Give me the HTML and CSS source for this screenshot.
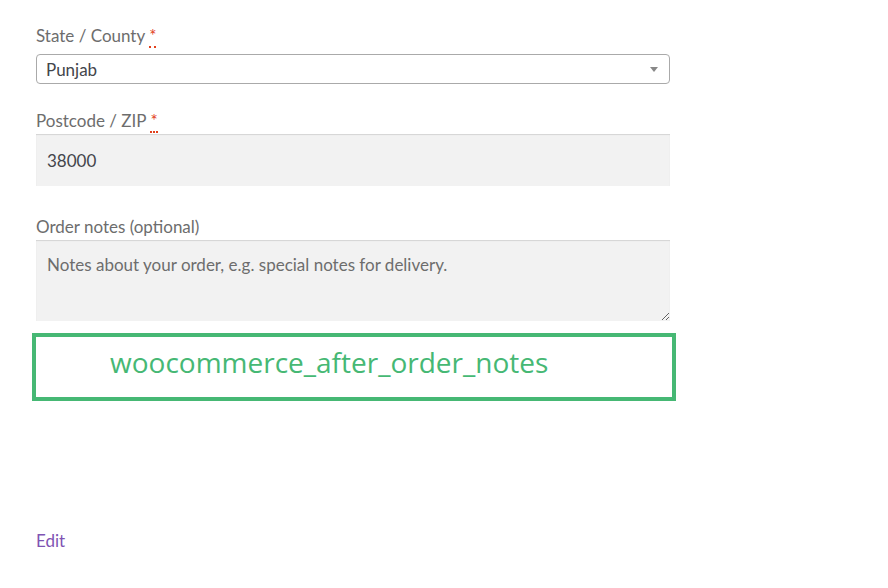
FILE: index.html
```html
<!DOCTYPE html>
<html lang="en">
<head>
    <meta charset="UTF-8">
    <meta name="viewport" content="width=device-width, initial-scale=1.0">
    <title>Checkout</title>
    <link rel="stylesheet" href="styles.css">
</head>
<body>
    <div class="checkout">
        <p class="form-row state-row">
            <label class="field-label">State / County <abbr class="required" title="required">*</abbr></label>
            <span class="select-box">
                <span class="select-value">Punjab</span>
                <span class="select-arrow"></span>
            </span>
        </p>
        <p class="form-row">
            <label class="field-label" for="postcode">Postcode / ZIP <abbr class="required" title="required">*</abbr></label>
            <input class="input-text" id="postcode" type="text" value="38000">
        </p>
        <p class="form-row notes-row">
            <label class="field-label" for="order_comments">Order notes (optional)</label>
            <textarea class="input-text notes" id="order_comments" placeholder="Notes about your order, e.g. special notes for delivery."></textarea>
        </p>
        <div class="hook-box">woocommerce_after_order_notes</div>
        <a class="edit-link" href="#">Edit</a>
    </div>
</body>
</html>
```

FILE: styles.css
```css
body {
    margin: 0;
    background: #fff;
    font-family: "Lato", "Liberation Sans", sans-serif;
    color: #6d6d6d;
}

.checkout {
    width: 634px;
    padding: 24px 0 0 36px;
}

.form-row {
    margin: 0 0 29px;
}

.field-label {
    display: block;
    font-size: 17px;
    line-height: 24px;
    margin-bottom: 1px;
}

.state-row {
    margin-bottom: 25px;
}

.state-row .field-label {
    margin-bottom: 6px;
}

.required {
    color: #e2401c;
    text-decoration: none;
    border-bottom: 2px dotted #e2401c;
    font-weight: 400;
}

.select-box {
    display: flex;
    align-items: center;
    justify-content: space-between;
    box-sizing: border-box;
    height: 30px;
    border: 1px solid #aaa;
    border-radius: 4px;
    padding: 0 11px 0 9px;
    color: #43454b;
    font-size: 17px;
}

.select-arrow {
    width: 0;
    height: 0;
    border-left: 4px solid transparent;
    border-right: 4px solid transparent;
    border-top: 5px solid #888;
}

.input-text {
    display: block;
    box-sizing: border-box;
    width: 100%;
    height: 52px;
    margin: 0;
    padding: 0 11px;
    border: 0;
    box-shadow: inset 0 1px 1px rgba(0, 0, 0, 0.125);
    background: #f2f2f2;
    font-family: inherit;
    font-size: 17px;
    color: #43454b;
    outline: none;
}

.notes {
    height: 81px;
    padding: 13px 11px;
    line-height: 24px;
    resize: vertical;
}

.notes::placeholder {
    color: #6d6d6d;
    opacity: 1;
}

.notes-row {
    margin-bottom: 12px;
}

.hook-box {
    box-sizing: border-box;
    width: 644px;
    height: 68px;
    margin-left: -4px;
    border: 4px solid #46b874;
    padding: 5px 0 0 74px;
    color: #46b874;
    font-family: "Open Sans", sans-serif;
    font-size: 28px;
    line-height: 40px;
}

.edit-link {
    display: inline-block;
    margin-top: 129px;
    color: #7f54b3;
    text-decoration: none;
    font-size: 17px;
}
```
